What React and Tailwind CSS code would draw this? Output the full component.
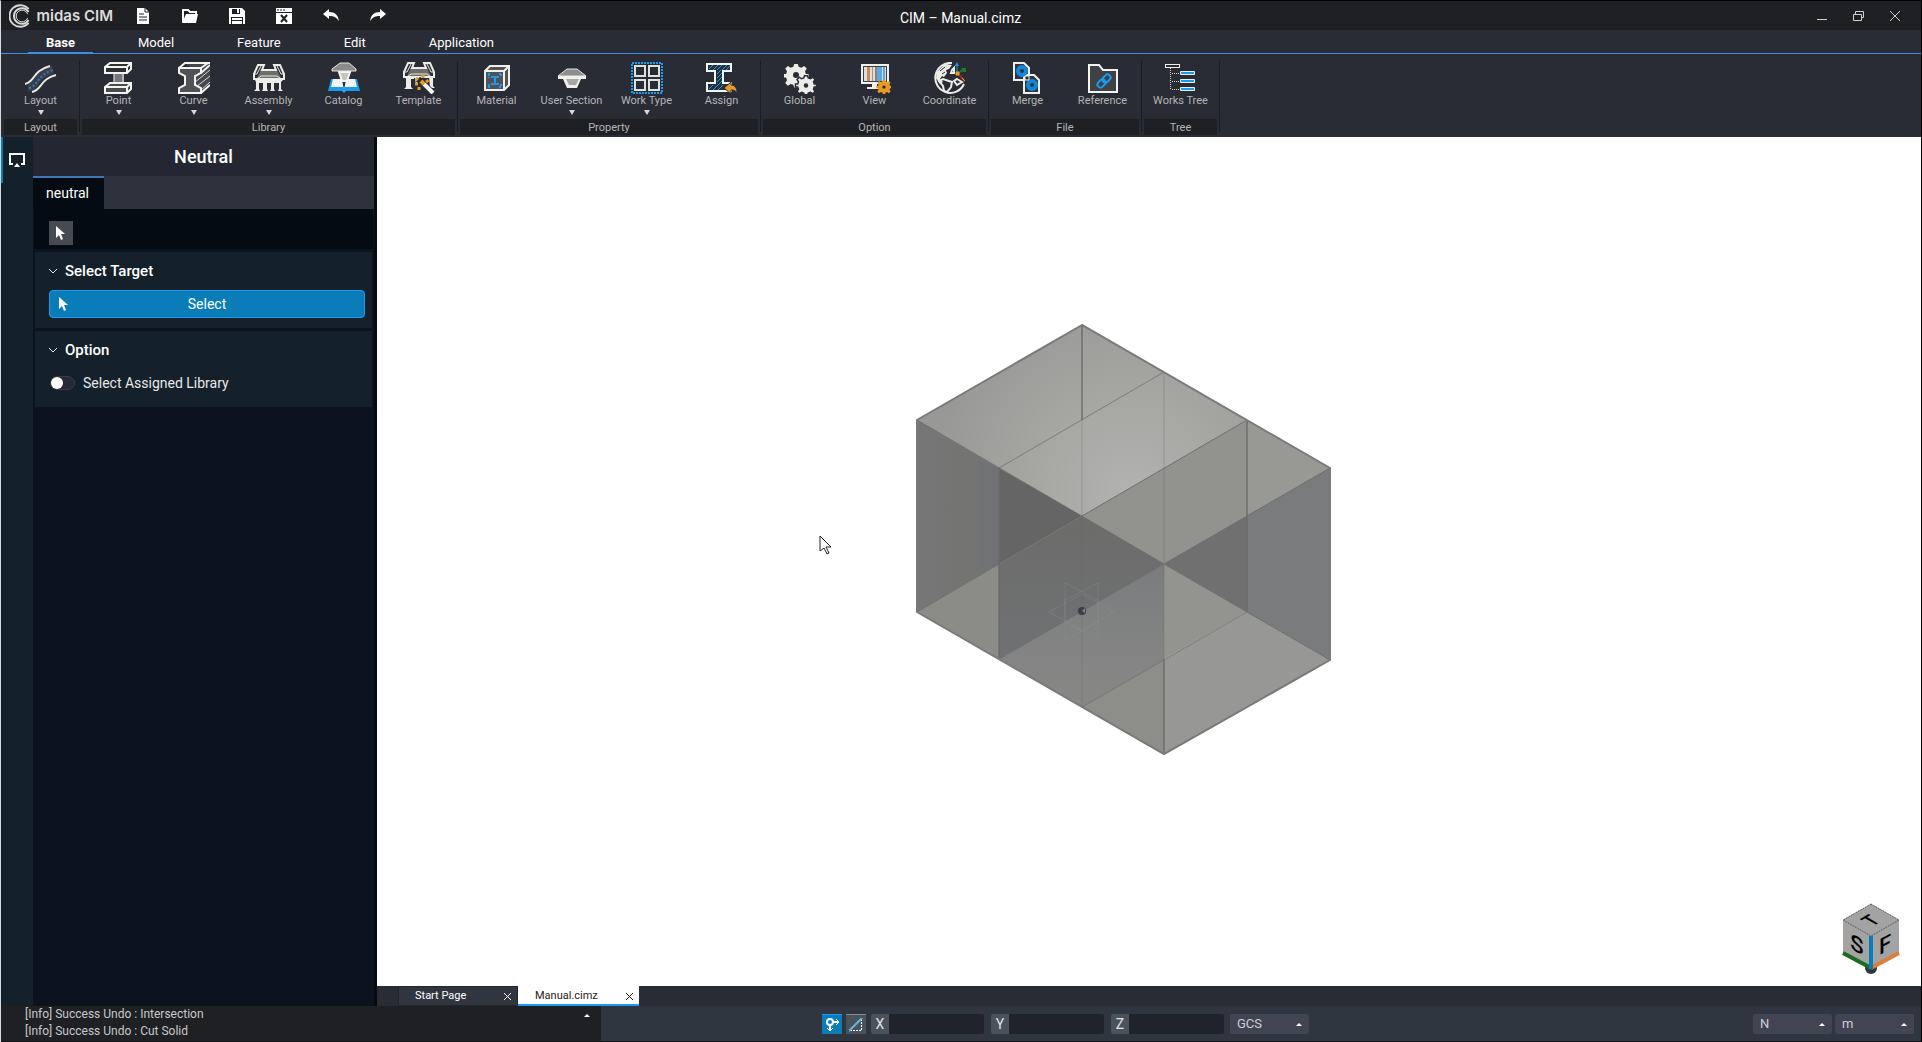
import React, { useState } from "react"

const LayoutIcon = () => (
  <svg width="32" height="32" viewBox="0 0 32 32" fill="none">
    <path d="M3 25C12 26 8 12 28 8" stroke="#3c4046" strokeWidth="8" />
    <path d="M0 22C10 20 7 9 25 4" stroke="#e8e8e4" strokeWidth="2" />
    <path d="M7 30C17 28 15 17 31 13" stroke="#e8e8e4" strokeWidth="2" />
    <path d="M4 26C13 24 12 13 28 8" stroke="#1f7fd0" strokeWidth="2" strokeDasharray="2 2" />
  </svg>
)

const PointIcon = () => (
  <svg width="32" height="32" viewBox="0 0 32 32" stroke="#f4f4f0" strokeWidth="2">
    <rect x="11" y="9" width="10" height="15" fill="#77777a" stroke="none" />
    <path d="M11 11v10M20 10v10" strokeWidth="1" />
    <path d="M2 5l5-4h21v6l-4 4H2z" fill="#2e2f33" />
    <path d="M2 5h22l4-4M24 5v6" fill="none" />
    <path d="M2 25l5-4h21v6l-4 4H2z" fill="#4a4b4e" />
    <path d="M2 25h22l4-4M24 25v6" fill="none" />
  </svg>
)

const CurveIcon = () => (
  <svg width="32" height="32" viewBox="0 0 32 32" fill="none">
    <path d="M6 0h26v22l-9 9-5-6V11z" fill="#44484d" />
    <path d="M16 21L32 8M18 25L32 14M22 29L32 20" stroke="#d8d8d4" strokeWidth="1" />
    <path d="M1 6h22v5l-6 3v9l6 3v5H1v-5l6-3v-9l-6-3z" fill="#505256" stroke="#f4f4f0" strokeWidth="2" />
    <path d="M1 6l6-5h25M23 6l7-5M23 11l9-8M23 31l9-8" stroke="#f4f4f0" strokeWidth="2" />
  </svg>
)

const BridgeShape = () => (
  <>
    <path d="M8 8h16l4 8H4z" fill="#6d6d6d" />
    <path d="M5 3h6l-2 5h14l-2-5h6l4 9v5H1v-5z" stroke="#ecece8" strokeWidth="2" fill="none" />
    <path d="M1 12h3l4-8M31 12h-3l-4-8M4 17l4-3h16l4 3" stroke="#ecece8" strokeWidth="1" fill="none" />
    <path d="M0 16h32v2H0z" fill="#ecece8" />
  </>
)

const AssemblyIcon = () => (
  <svg width="32" height="32" viewBox="0 0 32 32">
    <BridgeShape />
    <path d="M2 18h28l-2 2v7l2 2h-5l1-2v-6h-5v6l1 2h-5l1-2v-6h-4v6l1 2H9l1-2v-6H6v6l1 2H1l2-2v-7z" fill="#ecece8" />
  </svg>
)

const CatalogIcon = () => (
  <svg width="32" height="32" viewBox="0 0 32 32">
    <path d="M3 17h10l3 9 3-9h10l3 12H18l-2 2-2-2H0z" fill="#1a9bf0" />
    <path d="M5 17h9l2 13 2-13h9l2 8H17l-1 4-1-4H3z" fill="#f4f4f2" />
    <path d="M11 10h11l-3 9h-5z" fill="#c4c4c2" stroke="#f4f4f2" strokeWidth="2" />
    <path d="M12 1h9l7 6v2H4V7z" fill="#8b8b8b" stroke="#e4e4e0" strokeWidth="1" />
  </svg>
)

const TemplateIcon = () => (
  <svg width="32" height="32" viewBox="0 0 32 32">
    <g transform="translate(0 -2)">
      <BridgeShape />
    </g>
    <path d="M2 15h9v2H8v8l2 2H1l2-2v-8zM26 14h4v10l2 2h-5zM12 16h3v7h-2z" fill="#ecece8" />
    <path d="M15 17l15 14" stroke="#2a2c35" strokeWidth="6" />
    <path d="M21 22l9 9" stroke="#fff" strokeWidth="4" />
    <path d="M18 19l3 3" stroke="#e79a25" strokeWidth="4" />
    <path d="M20 13v4M13 16l2 2M12 22h4M16 25v4M23 20l3-2" stroke="#e79a25" strokeWidth="3" strokeDasharray="3 1" />
  </svg>
)

const MaterialIcon = () => (
  <svg width="32" height="32" viewBox="0 0 32 32" fill="none">
    <path d="M4 9l6-5h19v19l-6 5H4z" fill="#505256" />
    <path d="M4 9l5-5h19v19l-5 5H4zM4 9h19v19M23 9l5-5" stroke="#f0f0ec" strokeWidth="2" />
    <path d="M7 12h3M18 12h3M7 25h3M18 25h3M8 12v4M20 12v3M8 22v3M20 22v3" stroke="#1a9bf0" strokeWidth="2" strokeDasharray="2 1" />
    <path d="M10 15h8M10 22h8M14 15v7" stroke="#1a9bf0" strokeWidth="2" />
  </svg>
)

const SectionIcon = () => (
  <svg width="32" height="32" viewBox="0 0 32 32">
    <path d="M11 7h10l9 7H2z" fill="#8d8d8d" stroke="#e4e4e0" strokeWidth="1" />
    <path d="M2 14h28v3h-5l-4 9H11l-4-9H2z" fill="#f0f0ec" />
    <path d="M10 17h13l-3 6h-7z" fill="#a8a8a6" />
  </svg>
)

const WorkTypeIcon = () => (
  <svg width="32" height="32" viewBox="0 0 32 32" fill="none">
    <rect x="1" y="1" width="30" height="30" stroke="#1a9bf0" strokeWidth="2" strokeDasharray="2 1" />
    <path d="M4 4h10v10H4zM18 4h10v10H18zM4 18h10v10H4zM18 18h10v10H18z" stroke="#dde3dc" strokeWidth="2" />
  </svg>
)

const AssignIcon = () => (
  <svg width="32" height="32" viewBox="0 0 32 32" fill="none">
    <path d="M1 2h24v7h-8v12h8v8H1v-8h8V9H1z" fill="#25303c" stroke="#f4f4f0" strokeWidth="2" />
    <path d="M3 7l4-4M7 8l5-5M11 8l5-5M16 8l5-5M20 8l4-4M11 12l4-4M11 16l5-5M11 20l5-5M11 24l5-5M3 27l4-4M7 28l5-5M12 28l5-5" stroke="#1a9bf0" strokeWidth="1" />
    <path d="M18 26l7-6v3c4 0 6 3 6 8-2-3-4-3-6-3v4z" fill="#e79a25" stroke="#2a2c35" strokeWidth="1" />
  </svg>
)

const gearTeeth = "M-2-11h4l1 3 3 1 3-2 3 3-2 3 1 3h3v4h-3l-1 3 2 3-3 3-3-2-3 1-1 3h-4l-1-3-3-1-3 2-3-3 2-3-1-3h-3v-4h3l1-3-2-3 3-3 3 2 3-1z"

const GlobalIcon = () => (
  <svg width="32" height="32" viewBox="0 0 32 32">
    <path d={gearTeeth} fill="#ecece8" transform="translate(12 12) scale(.9)" />
    <circle cx="12" cy="13" r="3" fill="#2a2c35" />
    <g transform="translate(22 22) scale(.75)">
      <path d={gearTeeth} fill="#ecece8" stroke="#2a2c35" strokeWidth="2" />
      <circle cx="0" cy="2" r="3" fill="#2a2c35" />
    </g>
  </svg>
)

const ViewIcon = () => (
  <svg width="32" height="32" viewBox="0 0 32 32">
    <path d="M2 2h28v20H2z" fill="#f0f0ec" />
    <path d="M4 4h24v16H4z" fill="#3c4046" />
    <path d="M5 5h22v14H5z" fill="#dedede" />
    <path d="M8 5h3v14H8zM13 5h1v14h-1z" fill="#c98b57" />
    <path d="M16 5h2v14h-2z" fill="#8c8078" />
    <path d="M18 5h5v14h-5zM24 5h2v14h-2z" fill="#59a9e6" />
    <path d="M13 22h5v3h2v2H8v-2h5z" fill="#f0f0ec" />
    <g transform="translate(25 24) scale(.55)">
      <path d={gearTeeth} fill="#e79a25" />
      <circle cx="0" cy="2" r="3" fill="#2a2c35" />
    </g>
  </svg>
)

const CoordinateIcon = () => (
  <svg width="32" height="32" viewBox="0 0 32 32" fill="none">
    <path d="M18 1A15 15 0 1 0 30 22" stroke="#ecece8" strokeWidth="2" />
    <path d="M3 10l8-8 7 1-3 4-3 1 1 3-3 4-2-1-2 3 3 3-3 2-4-6z" fill="#ecece8" />
    <path d="M6 9l5-4M8 12l3-2" stroke="#2a2c35" strokeWidth="1" />
    <path d="M5 19l4-2 9 3-1 5-4 5-3-1-1-5zM18 8l2-2v5h-3zM23 17l5 3-5 3-3-4z" stroke="#ecece8" strokeWidth="2" />
    <path d="M23 11V3" stroke="#1a9bf0" strokeWidth="1" />
    <path d="M21 4l2-4 2 4z" fill="#1a9bf0" />
    <path d="M24 11l5-3" stroke="#1f7a2e" strokeWidth="2" />
    <path d="M27 6h5v4h-3z" fill="#1f7a2e" />
    <path d="M24 12l6 6" stroke="#a52a2a" strokeWidth="2" />
    <path d="M22 10h3v3h-3zM28 16l3 3" fill="#e79a25" stroke="#e79a25" strokeWidth="1" />
  </svg>
)

const MergeIcon = () => (
  <svg width="32" height="32" viewBox="0 0 32 32" fill="#2e3642" stroke="#f0f0ec" strokeWidth="2">
    <path d="M2 1h10l5 5v12H2z" />
    <path d="M12 13h10l5 5v13H12z" />
    <circle cx="10" cy="9" r="4" fill="none" stroke="#1288dc" strokeWidth="4" />
    <circle cx="20" cy="23" r="4" fill="none" stroke="#1288dc" strokeWidth="4" />
    <path d="M13 14h4v4h-4z" fill="#2a2c35" strokeWidth="1" />
  </svg>
)

const ReferenceIcon = () => (
  <svg width="32" height="32" viewBox="0 0 32 32" fill="none">
    <path d="M2 3h10l4 5h14v22H2z" fill="#404144" stroke="#f4f4f0" strokeWidth="2" />
    <g stroke="#1a9bf0" strokeWidth="2" transform="rotate(-45 17 19)">
      <rect x="9" y="16" width="9" height="6" rx="3" />
      <rect x="16" y="16" width="9" height="6" rx="3" />
    </g>
  </svg>
)

const TreeIcon = () => (
  <svg width="32" height="32" viewBox="0 0 32 32" fill="none">
    <path d="M5.5 6v22M7 11.5h9M7 19.5h9M7 27.5h9" stroke="#d8d8d4" strokeDasharray="1 1" />
    <rect x="0.5" y="2.5" width="14" height="3" stroke="#f0f0ec" />
    <path d="M15.5 9.5h14v3h-14zM15.5 17.5h14v3h-14zM15.5 25.5h14v3h-14z" fill="#1a9bf0" stroke="#f0f0ec" />
  </svg>
)

const groups = [
  { name: "Layout", items: [{ label: "Layout", icon: LayoutIcon, menu: true }] },
  {
    name: "Library",
    items: [
      { label: "Point", icon: PointIcon, menu: true },
      { label: "Curve", icon: CurveIcon, menu: true },
      { label: "Assembly", icon: AssemblyIcon, menu: true },
      { label: "Catalog", icon: CatalogIcon },
      { label: "Template", icon: TemplateIcon },
    ],
  },
  {
    name: "Property",
    items: [
      { label: "Material", icon: MaterialIcon },
      { label: "User Section", icon: SectionIcon, menu: true },
      { label: "Work Type", icon: WorkTypeIcon, menu: true },
      { label: "Assign", icon: AssignIcon },
    ],
  },
  {
    name: "Option",
    items: [
      { label: "Global", icon: GlobalIcon },
      { label: "View", icon: ViewIcon },
      { label: "Coordinate", icon: CoordinateIcon },
    ],
  },
  {
    name: "File",
    items: [
      { label: "Merge", icon: MergeIcon },
      { label: "Reference", icon: ReferenceIcon },
    ],
  },
  { name: "Tree", items: [{ label: "Works Tree", icon: TreeIcon }] },
]

const quickActions = [
  {
    label: "New",
    icon: (
      <svg width="16" height="16" viewBox="0 0 16 16">
        <path d="M2 0h8l4 4v12H2z" fill="#fff" />
        <path d="M10 0v4h4M4 6h5M4 9h8M4 12h8" stroke="#1f2024" fill="none" />
      </svg>
    ),
  },
  {
    label: "Open",
    icon: (
      <svg width="16" height="16" viewBox="0 0 16 16">
        <path d="M1 14V2h5l2 2h6v3" stroke="#fff" strokeWidth="2" fill="none" />
        <path d="M4 6h12l-2 9H0z" fill="#fff" />
      </svg>
    ),
  },
  {
    label: "Save",
    icon: (
      <svg width="16" height="16" viewBox="0 0 16 16">
        <path d="M0 0h13l3 3v13H0z" fill="#fff" />
        <path d="M3 1h8v5H3zM2 9h12v7H2z" fill="#1f2024" />
        <path d="M8 1h2v4H8zM3 10h10v2H3zM3 13h10v3H3z" fill="#fff" />
      </svg>
    ),
  },
  {
    label: "Close file",
    icon: (
      <svg width="16" height="16" viewBox="0 0 16 16">
        <path d="M0 0h16v16H0z" fill="#fff" />
        <path d="M0 4.5h16M1 2h2M4 2h2M7 2h2" stroke="#1f2024" />
        <path d="M5 7l6 7M11 7l-6 7" stroke="#1f2024" strokeWidth="2" />
      </svg>
    ),
  },
  {
    label: "Undo",
    icon: (
      <svg width="16" height="16" viewBox="0 0 16 16">
        <path d="M0 6l6-5v3c6 0 9 3 10 9-3-4-5-5-10-5v3z" fill="#fff" />
      </svg>
    ),
  },
  {
    label: "Redo",
    icon: (
      <svg width="16" height="16" viewBox="0 0 16 16">
        <path d="M16 6l-6-5v3C4 4 1 7 0 13c3-4 5-5 10-5v3z" fill="#fff" />
      </svg>
    ),
  },
]

const Pointer = () => (
  <svg width="10" height="14" viewBox="0 0 10 14">
    <path d="M0 0v12l3-3 2 5 2-1-2-5h4z" fill="#fff" />
  </svg>
)

const Chevron = () => (
  <svg width="8" height="5" viewBox="0 0 8 5">
    <path d="M0 0l4 4 4-4" stroke="#e6e6e6" fill="none" />
  </svg>
)

const CloseMark = () => (
  <svg width="7" height="7" viewBox="0 0 7 7">
    <path d="M0 0l7 7M7 0L0 7" stroke="currentColor" />
  </svg>
)

const TitleBar = () => (
  <header className="flex h-[29px] items-center bg-[#1f2024]">
    <div className="flex w-28 items-center gap-[6px] pl-2">
      <svg width="22" height="24" viewBox="0 0 22 24" fill="none" stroke="#d8d8d8">
        <path d="M20 5A11 11 0 1 0 20 19" strokeWidth="2" />
        <path d="M20 8A8 8 0 1 0 20 16" strokeWidth="2" />
        <path d="M19 10A6 6 0 1 0 19 14" />
      </svg>
      <span className="font-[Inter] text-[15px] leading-5 font-semibold whitespace-nowrap text-[#dcdcdc]">midas CIM</span>
    </div>
    <div className="flex gap-[31px] pl-[22px]">
      {quickActions.map((action) => (
        <button key={action.label} aria-label={action.label}>
          {action.icon}
        </button>
      ))}
    </div>
    <h1 className="flex-1 pt-1 pr-[282px] text-center text-sm leading-5 text-white">CIM – Manual.cimz</h1>
    <div className="flex items-center gap-[26px] pr-[21px]">
      <button aria-label="Minimize">
        <svg width="10" height="10" viewBox="0 0 10 10">
          <path d="M0 8.5h10" stroke="#d0d0d0" />
        </svg>
      </button>
      <button aria-label="Restore">
        <svg width="11" height="10" viewBox="0 0 11 10" fill="none" stroke="#d0d0d0">
          <path d="M.5 3.5h8v6h-8zM2.5 3V.5h8v6H9" />
        </svg>
      </button>
      <button aria-label="Close">
        <svg width="10" height="10" viewBox="0 0 10 10">
          <path d="M0 0l10 10M10 0L0 10" stroke="#d0d0d0" />
        </svg>
      </button>
    </div>
  </header>
)

const menuTabs = ["Base", "Model", "Feature", "Edit", "Application"]

const MenuTabs = () => {
  const [active, setActive] = useState("Base")
  return (
    <nav className="flex h-6 gap-[27px] border-b border-[#3d8ee6] bg-[#2a2c35] pl-[27px]">
      {menuTabs.map((tab) => (
        <button
          key={tab}
          onClick={() => setActive(tab)}
          className={
            active === tab
              ? "border-b border-[#3d8ee6] px-[18px] pt-1 text-[13px] leading-[18px] font-bold text-white"
              : "border-b border-transparent px-[18px] pt-1 text-[13px] leading-[18px] text-white"
          }
        >
          {tab}
        </button>
      ))}
    </nav>
  )
}

const Ribbon = () => (
  <div className="flex h-[83px] bg-[#2a2c35] pl-[2px]">
    {groups.map((group) => (
      <section key={group.name} className="flex">
        <div className="flex flex-col">
          <div className="flex h-[65px] pt-2">
            {group.items.map(({ label, icon: Icon, menu }) => (
              <button key={label} className="flex w-[75px] flex-col items-center text-[#b4b4b4]">
                <Icon />
                <span className="text-[11px] leading-[14px] whitespace-nowrap">{label}</span>
                {menu && (
                  <svg className="mt-[2px]" width="6" height="5" viewBox="0 0 6 5">
                    <path d="M0 0h6L3 5z" fill="#d8d8d8" />
                  </svg>
                )}
              </button>
            ))}
          </div>
          <h2 className="mx-px h-4 bg-[#1f2024] text-center text-[11px] leading-[18px] text-[#b4b4b4]">{group.name}</h2>
        </div>
        <div className="mx-px mt-[7px] h-[71px] w-px bg-[#1b1c20]" />
      </section>
    ))}
  </div>
)

const SidePanel = () => {
  const [assigned, setAssigned] = useState(false)
  return (
    <aside className="flex w-[376px] shrink-0 border-r-[3px] border-[#050b12] bg-[#0c131e]">
      <div className="w-8 bg-[#14202a]">
        <button
          aria-label="Display"
          className="flex h-[46px] w-full items-center border-l-2 border-[#0a7db8] pl-[6px]"
        >
          <svg width="16" height="14" viewBox="0 0 16 14">
            <path d="M4 11H1V1h14v10h-3" stroke="#fff" strokeWidth="2" fill="none" />
            <path d="M5 14l3-4 3 4z" fill="#fff" />
          </svg>
        </button>
      </div>
      <div className="flex-1">
        <h2 className="h-[39px] bg-[#242731] text-center text-lg leading-10 font-medium text-white">Neutral</h2>
        <div className="h-[33px] bg-[#2e323d]">
          <button className="h-full w-[71px] border-t-2 border-[#3d7ab5] bg-[#050b12] pr-[2px] pb-[2px] text-sm text-white">
            neutral
          </button>
        </div>
        <div className="mx-px h-10 bg-[#050b12] pt-3 pl-[15px]">
          <button aria-label="Pick" className="flex h-6 w-6 items-center justify-center bg-[#454a53]">
            <Pointer />
          </button>
        </div>
        <section className="mx-[2px] mt-[3px] h-[76px] bg-[#14202a] pr-[7px] pl-[14px]">
          <h3 className="flex h-[38px] items-center gap-2 text-[15px] font-medium text-white">
            <Chevron />
            Select Target
          </h3>
          <button className="flex h-7 w-full items-center rounded-sm border border-[#1a9bf0] bg-[#0a7db8] px-[9px] text-sm text-white">
            <Pointer />
            <span className="flex-1 pr-[10px]">Select</span>
          </button>
        </section>
        <section className="mx-[2px] mt-[3px] h-[76px] bg-[#14202a] pr-[7px] pl-[14px]">
          <h3 className="flex h-[38px] items-center gap-2 text-[15px] font-medium text-white">
            <Chevron />
            Option
          </h3>
          <label className="flex h-7 items-center gap-2 text-sm text-[#e8e8e8]">
            <input
              type="checkbox"
              checked={assigned}
              onChange={(e) => setAssigned(e.target.checked)}
              className="ml-px h-[14px] w-[25px] appearance-none rounded-full border border-[#383d49] bg-[#262a36] before:block before:h-3 before:w-3 before:rounded-full before:bg-white checked:bg-[#0a7db8] checked:before:ml-[11px]"
            />
            Select Assigned Library
          </label>
        </section>
      </div>
    </aside>
  )
}

// Two overlapping translucent boxes in isometric view
const faces = [
  ["182,15 17,110 182,206 347,110", "url(#top)"],
  ["182,206 347,110 347,206 264,254", "#92928f"],
  ["347,110 430,158 347,206", "#989895"],
  ["17,110 99,158 99,254 17,302", "url(#side)"],
  ["17,302 99,254 99,349", "#8b8b87"],
  ["99,158 182,206 99,254", "#656565"],
  ["182,206 264,254 99,349 99,254", "url(#front)"],
  ["99,349 264,254 264,444", "url(#base)"],
  ["264,254 347,206 347,302", "#6f706f"],
  ["347,206 430,158 430,350 347,302", "#7a7b7c"],
  ["264,254 347,302 264,349", "#93938f"],
  ["264,349 347,302 430,350 264,444", "#979795"],
  ["264,349 182,397 264,444", "#8d8d8a"],
]

const BoxModel = () => (
  <svg className="absolute top-[173px] left-[523px]" width="450" height="460" viewBox="0 0 450 460">
    <defs>
      <radialGradient id="top" gradientUnits="userSpaceOnUse" cx="230" cy="180" r="200">
        <stop offset="0" stopColor="#b2b3b1" />
        <stop offset=".4" stopColor="#a8a9a5" />
        <stop offset="1" stopColor="#989896" />
      </radialGradient>
      <linearGradient id="side">
        <stop offset="0" stopColor="#757676" />
        <stop offset=".6" stopColor="#747572" />
        <stop offset="1" stopColor="#6f7175" />
      </linearGradient>
      <linearGradient id="front" x1="0" y1="0" x2="0" y2="1">
        <stop offset="0" stopColor="#6c6c6a" />
        <stop offset="1" stopColor="#707174" />
      </linearGradient>
      <linearGradient id="base" x1="0" y1="0" x2="0" y2="1">
        <stop offset="0" stopColor="#7b7c7e" />
        <stop offset="1" stopColor="#8c8c89" />
      </linearGradient>
    </defs>
    {faces.map(([points, fill]) => (
      <polygon key={points} points={points} fill={fill} />
    ))}
    <g fill="none" stroke="#6b6b6b">
      <path d="M182 110v96M182 301v96M264 62v192M264 254v95" opacity=".35" />
      <path d="M99 158L264 62M182 397l165-95M99 254l83-48M182 206v95" opacity=".7" />
      <path d="M182 15v95M99 158v191M347 110v192M264 349v95" strokeWidth="2" opacity=".7" />
      <path d="M17 302l82-48M99 349l165-95M182 206l165-96" />
      <path d="M17 110l247 144 166-96M264 254l166 96" />
      <path d="M182 15L17 110v192l247 142 166-94V158z" strokeWidth="2" stroke="#7a7a7a" />
    </g>
    <g fill="none" stroke="#8f9296" opacity=".3">
      <path d="M165 273l33 17v40l-33-18zM198 273l-33 17v40l33-18zM149 302l33-18 32 18-32 18z" />
    </g>
    <circle cx="182" cy="301" r="4" fill="#3c4046" />
    <path d="M182 301l3-3v5z" fill="#7d8792" />
  </svg>
)

const ViewCube = () => (
  <svg className="absolute right-5 bottom-[10px]" width="60" height="74" viewBox="0 0 60 74">
    <circle cx="30" cy="66" r="6" fill="#2f3640" />
    <path d="M30 2l28 16v33L30 67 2 51V18z" fill="#a3a3a3" />
    <path d="M30 2l28 16-28 16L2 18z" fill="#a3a3a3" stroke="#444" strokeDasharray="1 1" />
    <path d="M2 51l28 15" stroke="#1f6a1f" strokeWidth="4" />
    <path d="M58 51L30 66" stroke="#d9803a" strokeWidth="4" />
    <path d="M30 34v33" stroke="#0a7db8" strokeWidth="4" />
    <g fontFamily="Roboto, sans-serif" fontSize="22" fontWeight="500" textAnchor="middle">
      <text transform="translate(16 50) skewY(28)">S</text>
      <text transform="translate(44 50) skewY(-28)">F</text>
      <text transform="translate(36 22) rotate(-30) skewX(30)" fontSize="18">
        T
      </text>
    </g>
  </svg>
)

const Viewport = () => (
  <main className="relative flex-1 overflow-hidden bg-white">
    <BoxModel />
    <ViewCube />
    <svg className="absolute top-[398px] left-[442px]" width="13" height="20" viewBox="0 0 13 20">
      <path d="M1 1v15l4-3 3 6 2-1-3-6h5z" fill="#fff" stroke="#222" />
    </svg>
  </main>
)

const FileTabs = () => (
  <div className="flex h-5 bg-[#2a2c35] pl-[21px] text-[11px]">
    <div className="flex w-[120px] items-center justify-between border border-[#23252c] bg-[#2f3640] pt-px pr-[6px] pl-4 text-white">
      <button>Start Page</button>
      <button aria-label="Close Start Page">
        <CloseMark />
      </button>
    </div>
    <div className="flex w-[121px] items-center justify-between border-b-2 border-[#1a9bf0] bg-white pt-[2px] pr-[6px] pl-[17px] text-[#1f2024]">
      <button>Manual.cimz</button>
      <button aria-label="Close Manual.cimz">
        <CloseMark />
      </button>
    </div>
  </div>
)

const UpArrow = () => (
  <svg width="6" height="3" viewBox="0 0 6 3">
    <path d="M0 3l3-3 3 3z" fill="#fff" />
  </svg>
)

const UnitSelect = ({ label, value }) => (
  <div className="flex h-5 w-[79px] items-center rounded-xs bg-[#434452] pr-[7px]">
    <select
      aria-label={label}
      defaultValue={value}
      className="flex-1 appearance-none bg-transparent pl-[7px] text-[13px] leading-5 text-[#c8d0da] outline-none"
    >
      <option>{value}</option>
    </select>
    <UpArrow />
  </div>
)

const StatusBar = () => (
  <footer className="flex h-9 border-b border-[#15161a] bg-[#2f3640]">
    <div className="flex w-[600px] justify-between bg-[#1f2024] pr-[11px] pl-6 text-xs leading-[17px] text-[#c8c8c8]">
      <div>
        <p>[Info] Success Undo : Intersection</p>
        <p>[Info] Success Undo : Cut Solid</p>
      </div>
      <button aria-label="Expand log" className="flex h-[18px] items-center">
        <UpArrow />
      </button>
    </div>
    <div className="flex flex-1 items-center pt-px pr-[7px] pl-[221px]">
      <button aria-label="Snap" className="flex h-5 w-5 items-center justify-center border-t border-[#1a9bf0] bg-[#0a7db8]">
        <svg width="16" height="16" viewBox="0 0 16 16" fill="none" stroke="#fff">
          <circle cx="6" cy="5" r="3" strokeWidth="2" />
          <path d="M9 5h5M6 8v6" strokeWidth="2" />
          <path d="M12 2l3 3-3 3M3 11l3 3 3-3" />
        </svg>
      </button>
      <button aria-label="Angle" className="ml-1 flex h-5 w-5 items-center justify-center border-t border-[#84878c] bg-[#4a525c]">
        <svg width="14" height="14" viewBox="0 0 14 14" fill="none">
          <path d="M1 12.5h11.5V1" stroke="#fff" strokeDasharray="2 1" />
          <path d="M0 13L13 0" stroke="#6db3da" strokeWidth="2" />
        </svg>
      </button>
      <div className="ml-[5px] flex gap-[7px]">
        {["X", "Y", "Z"].map((axis) => (
          <label key={axis} className="flex h-5 w-[113px] overflow-hidden rounded-xs bg-[#20232b] text-sm leading-5 text-[#e0e4e8]">
            <span className="w-[18px] bg-[#4a525c] text-center">{axis}</span>
            <input type="text" className="min-w-0 flex-1 bg-transparent px-1 outline-none" />
          </label>
        ))}
      </div>
      <div className="ml-[6px]">
        <UnitSelect label="Coordinate system" value="GCS" />
      </div>
      <div className="ml-auto flex gap-[3px]">
        <UnitSelect label="Force unit" value="N" />
        <UnitSelect label="Length unit" value="m" />
      </div>
    </div>
  </footer>
)

const App = () => (
  <div className="flex h-screen flex-col border-t border-r border-l border-black border-l-[#d8dade] bg-[#2a2c35] font-[Roboto,sans-serif]">
    <TitleBar />
    <MenuTabs />
    <Ribbon />
    <div className="flex min-h-0 flex-1">
      <SidePanel />
      <div className="flex min-w-0 flex-1 flex-col">
        <Viewport />
        <FileTabs />
      </div>
    </div>
    <StatusBar />
  </div>
)

export default App
